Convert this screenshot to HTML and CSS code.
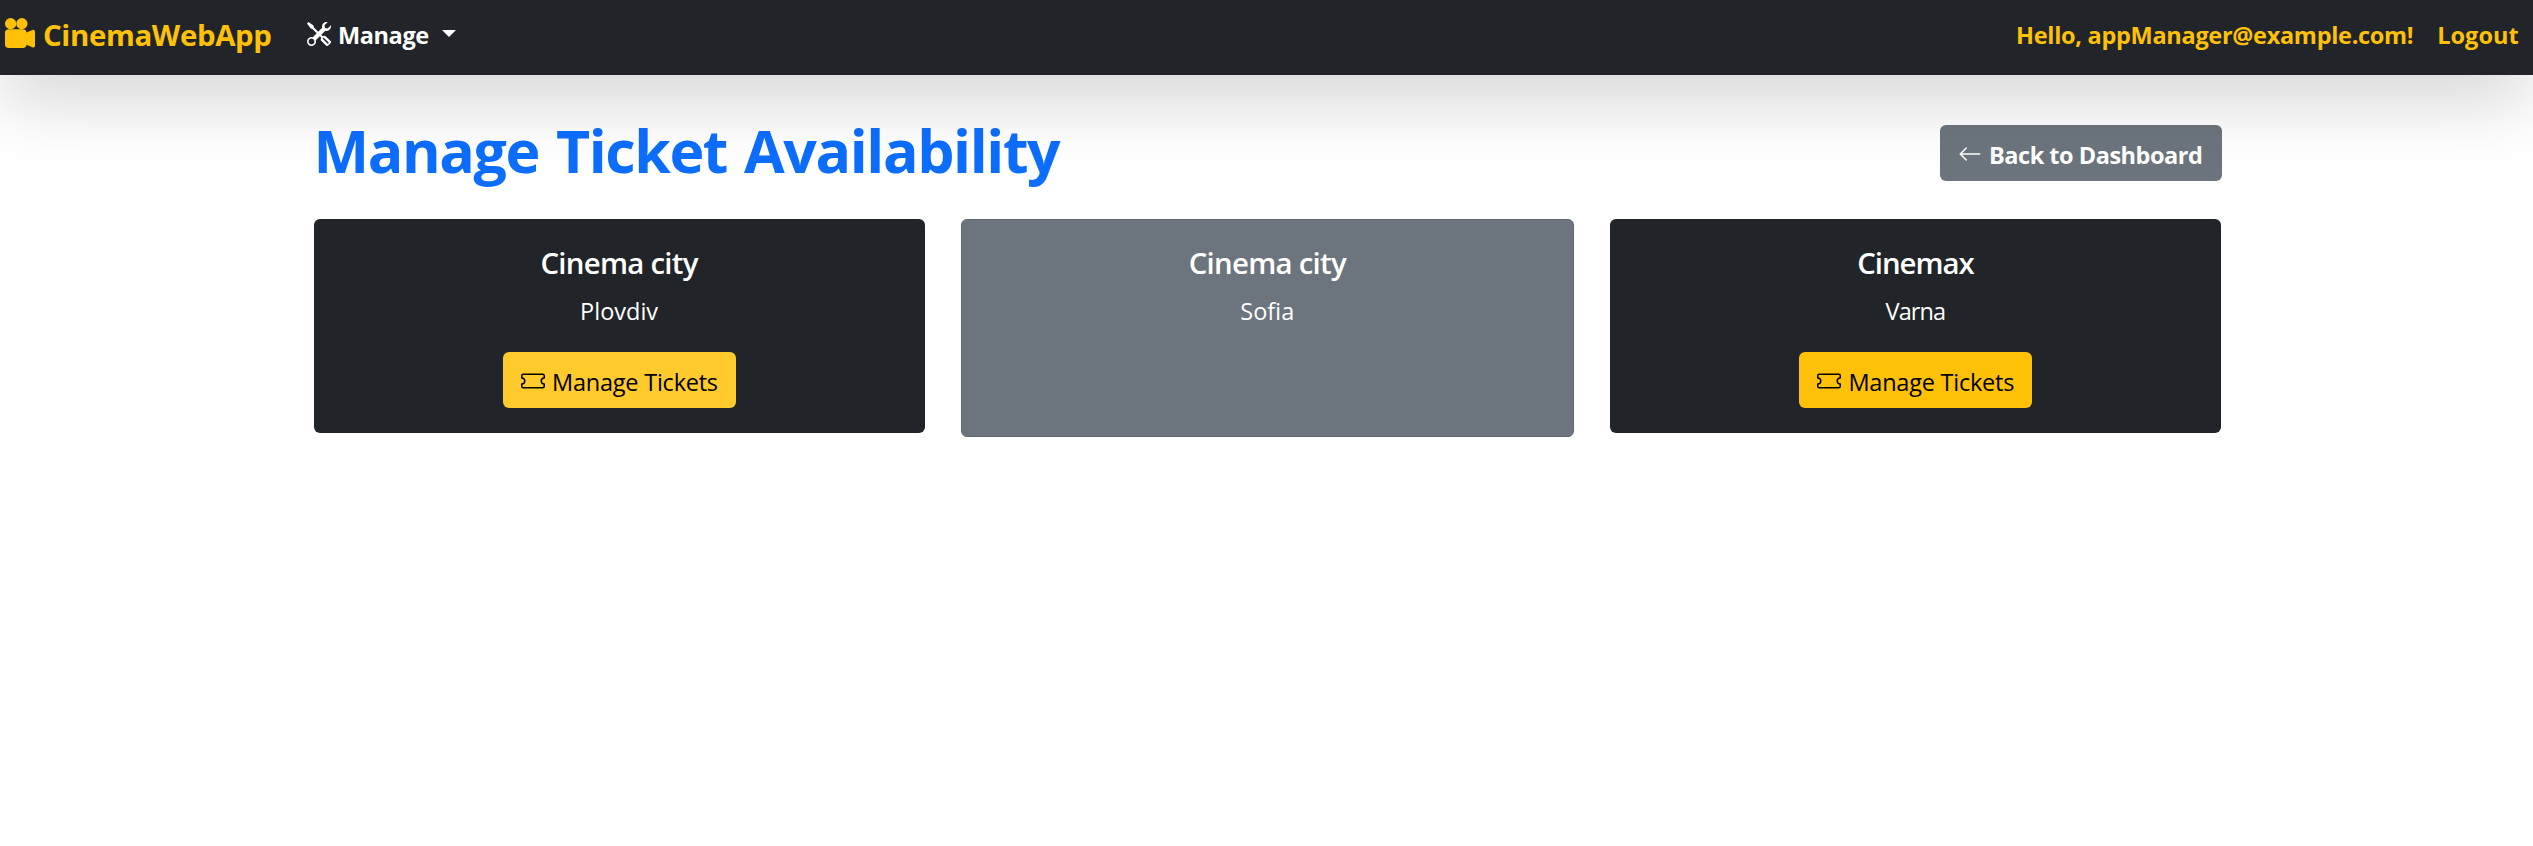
FILE: index.html
```html
<!DOCTYPE html>
<html lang="en">
<head>
<meta charset="utf-8">
<title>Manage Ticket Availability - CinemaWebApp</title>
<link rel="stylesheet" href="styles.css">
</head>
<body>
<svg class="sprite" aria-hidden="true">
  <symbol id="ticket" viewBox="0 0 16 16"><path d="M0 4.5A1.5 1.5 0 0 1 1.5 3h13A1.5 1.5 0 0 1 16 4.5V6a.5.5 0 0 1-.5.5 1.5 1.5 0 0 0 0 3 .5.5 0 0 1 .5.5v1.5a1.5 1.5 0 0 1-1.5 1.5h-13A1.5 1.5 0 0 1 0 11.5V10a.5.5 0 0 1 .5-.5 1.5 1.5 0 1 0 0-3A.5.5 0 0 1 0 6V4.5ZM1.5 4a.5.5 0 0 0-.5.5v1.05a2.5 2.5 0 0 1 0 4.9v1.05a.5.5 0 0 0 .5.5h13a.5.5 0 0 0 .5-.5v-1.05a2.5 2.5 0 0 1 0-4.9V4.5a.5.5 0 0 0-.5-.5h-13Z"/></symbol>
</svg>
<nav class="navbar">
  <a class="brand">
    <svg class="brand-icon" viewBox="0 0 16 16"><path d="M6 3a3 3 0 1 1-6 0 3 3 0 0 1 6 0z"/><path d="M9 6a3 3 0 1 1 0-6 3 3 0 0 1 0 6z"/><path d="M9 6h.5a2 2 0 0 1 1.983 1.738l3.11-1.382A1 1 0 0 1 16 7.269v7.462a1 1 0 0 1-1.406.913l-3.111-1.382A2 2 0 0 1 9.5 16H2a2 2 0 0 1-2-2V8a2 2 0 0 1 2-2h7z"/></svg>
    <span>CinemaWebApp</span>
  </a>
  <a class="menu">
    <svg class="icon" viewBox="0 0 16 16"><path d="M1 0 0 1l2.2 3.081a1 1 0 0 0 .815.419h.07a1 1 0 0 1 .708.293l2.675 2.675-2.617 2.654A3.003 3.003 0 0 0 0 13a3 3 0 1 0 5.878-.851l2.654-2.617.968.968-.305.914a1 1 0 0 0 .242 1.023l3.27 3.27a.997.997 0 0 0 1.414 0l1.586-1.586a.997.997 0 0 0 0-1.414l-3.27-3.27a1 1 0 0 0-1.023-.242L10.5 9.5l-.96-.96 2.68-2.643A3.005 3.005 0 0 0 16 3c0-.269-.035-.53-.102-.777l-2.14 2.141L12 4l-.364-1.757L13.777.102a3 3 0 0 0-3.675 3.68L7.462 6.46 4.793 3.793a1 1 0 0 1-.293-.707v-.071a1 1 0 0 0-.419-.814L1 0Zm9.646 10.646a.5.5 0 0 1 .708 0l2.914 2.915a.5.5 0 0 1-.707.707l-2.915-2.914a.5.5 0 0 1 0-.708ZM3 11l.471.242.529.026.287.445.445.287.026.529L5 13l-.242.471-.026.529-.445.287-.287.445-.529.026L3 15l-.471-.242L2 14.732l-.287-.445L1.268 14l-.026-.529L1 13l.242-.471.026-.529.445-.287.287-.445.529-.026L3 11Z"/></svg>
    <span class="menu-label">Manage</span>
    <span class="caret"></span>
  </a>
  <div class="account">
    <a class="hello">Hello, appManager@example.com!</a>
    <a class="logout">Logout</a>
  </div>
</nav>
<main class="container">
  <header class="page-head">
    <h1>Manage Ticket Availability</h1>
    <a class="btn btn-back">
      <svg class="icon" viewBox="0 0 16 16"><path fill-rule="evenodd" d="M15 8a.5.5 0 0 0-.5-.5H2.707l3.147-3.146a.5.5 0 1 0-.708-.708l-4 4a.5.5 0 0 0 0 .708l4 4a.5.5 0 0 0 .708-.708L2.707 8.5H14.5A.5.5 0 0 0 15 8z"/></svg>
      <span>Back to Dashboard</span>
    </a>
  </header>
  <div class="cards">
    <section class="card">
      <h2>Cinema city</h2>
      <p>Plovdiv</p>
      <a class="btn btn-ticket is-hover"><svg class="icon"><use href="#ticket"/></svg><span>Manage Tickets</span></a>
    </section>
    <section class="card card-muted">
      <h2>Cinema city</h2>
      <p>Sofia</p>
    </section>
    <section class="card">
      <h2 class="tight">Cinemax</h2>
      <p class="tight">Varna</p>
      <a class="btn btn-ticket"><svg class="icon"><use href="#ticket"/></svg><span>Manage Tickets</span></a>
    </section>
  </div>
</main>
</body>
</html>
```
FILE: styles.css
```css
* { box-sizing: border-box; }
body {
  margin: 0;
  background: #fff;
  color: #212529;
  font: 400 23.5px/36px "Open Sans", "Noto Sans", sans-serif;
}
.sprite { display: none; }
svg { fill: currentColor; flex: none; }
.icon { width: 24px; height: 24px; }

.navbar {
  position: relative;
  z-index: 10;
  display: flex;
  align-items: center;
  height: 75px;
  padding: 0 14.4px 6px 5px;
  background: #212529;
  color: #ffc107;
  font-weight: 700;
  box-shadow: 0 24px 72px rgba(0, 0, 0, .175);
}
.brand {
  display: flex;
  align-items: center;
  gap: 8px;
  width: 301.5px;
  font-size: 29.4px;
  letter-spacing: -.36px;
}
.brand-icon { width: 30px; height: 30px; margin-top: -3px; }
.menu { display: flex; align-items: center; color: #fff; }
.menu .icon { margin-top: -1px; }
.menu-label { margin-left: 7.5px; letter-spacing: -.4px; }
.caret {
  margin: -2px 0 0 13px;
  border: 7.2px solid transparent;
  border-top-color: #fff;
  border-bottom: 0;
}
.account { display: flex; gap: 24px; margin-left: auto; }
.hello { letter-spacing: -.3px; }

.container { width: 1908px; margin-left: 313.5px; }
.page-head {
  display: flex;
  justify-content: space-between;
  align-items: flex-start;
  height: 144px;
  padding-top: 39px;
}
h1 {
  margin: 0;
  color: #0d6efd;
  font-size: 59px;
  font-weight: 700;
  line-height: 72px;
  letter-spacing: -1.4px;
  word-spacing: 3px;
}
.btn {
  display: flex;
  align-items: center;
  height: 56px;
  padding: 3px 18px 0;
  border-radius: 6px;
  white-space: nowrap;
}
.btn .icon { margin-top: -1px; }
.btn-back {
  width: 282px;
  margin-top: 11px;
  gap: 7.5px;
  background: #6c757d;
  color: #fff;
  font-weight: 700;
  letter-spacing: -.48px;
}
.cards { display: flex; align-items: flex-start; gap: 36px; width: 1907.5px; }
.card {
  display: flex;
  flex: 1;
  flex-direction: column;
  align-items: center;
  height: 214px;
  padding-top: 26px;
  border-radius: 6px;
  background: #212529;
  color: #fff;
}
.card-muted {
  height: 218px;
  padding-top: 25px;
  border: 1px solid #616971;
  background: #6c757d;
}
h2 {
  margin: 0 0 12px;
  font-size: 29.4px;
  font-weight: 600;
  line-height: 36px;
  letter-spacing: -.73px;
}
h2.tight { letter-spacing: -1.05px; }
p { margin: 0 0 23px; }
p.tight { letter-spacing: -.9px; }
.btn-ticket {
  width: 233px;
  gap: 7.5px;
  background: #ffc107;
  color: #000;
  letter-spacing: -.23px;
}
.btn-ticket.is-hover { background: #ffca2c; }
```
